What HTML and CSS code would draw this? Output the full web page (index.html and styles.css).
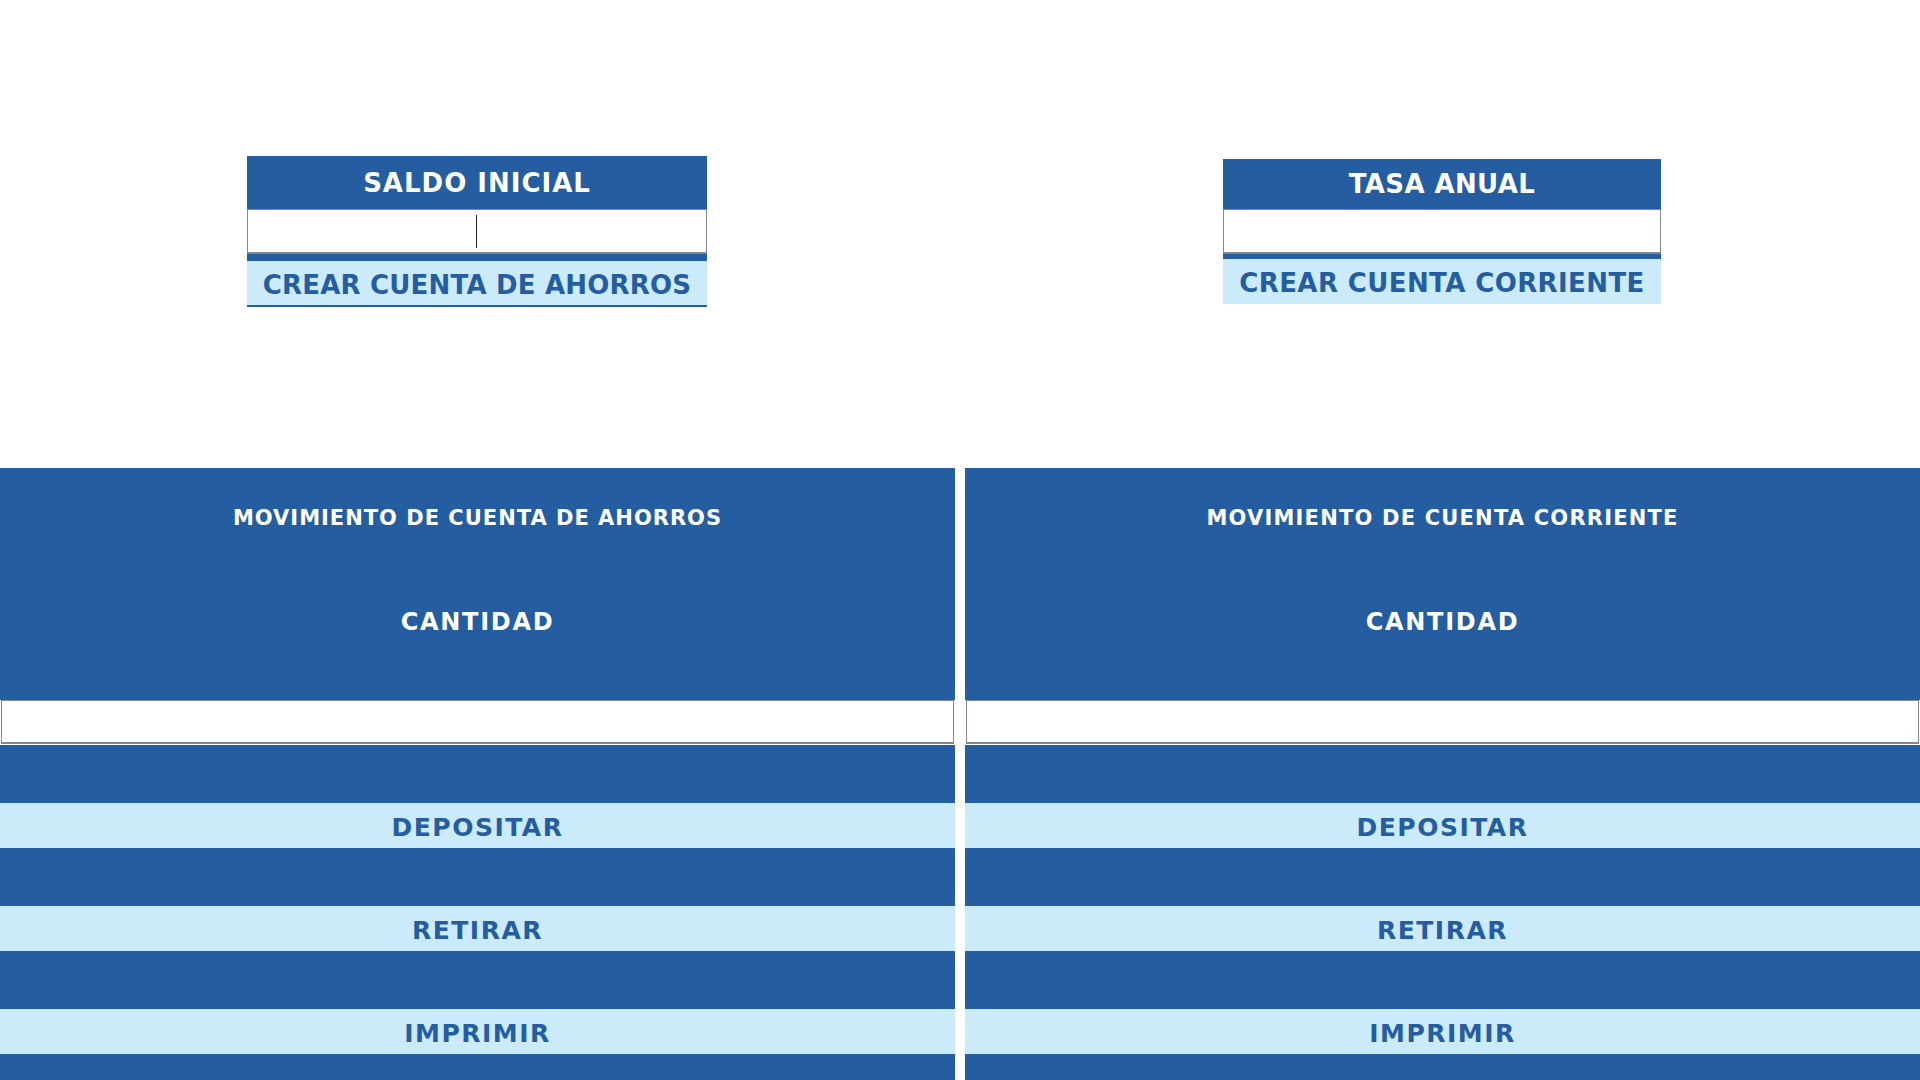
FILE: index.html
```html
<!DOCTYPE html>
<html lang="es">
<head>
<meta charset="utf-8">
<title>Cuentas</title>
<link rel="stylesheet" href="styles.css">
</head>
<body>
<div class="page">
  <section class="top">
    <div class="form form-ahorros">
      <div class="form-head">SALDO INICIAL</div>
      <div class="form-input"><span class="caret"></span></div>
      <div class="form-bar"></div>
      <div class="form-btn">CREAR CUENTA DE AHORROS</div>
    </div>
    <div class="form form-corriente">
      <div class="form-head">TASA ANUAL</div>
      <div class="form-input"></div>
      <div class="form-bar"></div>
      <div class="form-btn">CREAR CUENTA CORRIENTE</div>
    </div>
  </section>
  <section class="bottom">
    <div class="panel">
      <div class="panel-head">
        <div class="panel-title">MOVIMIENTO DE CUENTA DE AHORROS</div>
        <div class="panel-label">CANTIDAD</div>
      </div>
      <div class="panel-input-wrap"><div class="panel-input"></div></div>
      <div class="panel-btn">DEPOSITAR</div>
      <div class="panel-btn">RETIRAR</div>
      <div class="panel-btn">IMPRIMIR</div>
    </div>
    <div class="panel">
      <div class="panel-head">
        <div class="panel-title panel-title-wide">MOVIMIENTO DE CUENTA CORRIENTE</div>
        <div class="panel-label">CANTIDAD</div>
      </div>
      <div class="panel-input-wrap"><div class="panel-input"></div></div>
      <div class="panel-btn">DEPOSITAR</div>
      <div class="panel-btn">RETIRAR</div>
      <div class="panel-btn">IMPRIMIR</div>
    </div>
  </section>
</div>
</body>
</html>
```
FILE: styles.css
```css
html, body {
  margin: 0;
  padding: 0;
  background: #ffffff;
}
body {
  width: 1920px;
  height: 1080px;
  overflow: hidden;
  font-family: "DejaVu Sans", Verdana, sans-serif;
  font-weight: bold;
}
.page {
  display: flex;
  flex-direction: column;
  width: 1920px;
  height: 1080px;
}
.top {
  height: 468px;
  display: flex;
  align-items: flex-start;
  padding-left: 247px;
  box-sizing: border-box;
}
.form {
  display: flex;
  flex-direction: column;
}
.form-ahorros {
  width: 460px;
  margin-top: 156px;
}
.form-corriente {
  width: 438px;
  margin-top: 159px;
  margin-left: 516px;
}
.form-head {
  background: #255da1;
  color: #ffffff;
  font-size: 26px;
  letter-spacing: 0.4px;
  display: flex;
  align-items: center;
  justify-content: center;
  height: 53px;
}
.form-ahorros .form-head {
  letter-spacing: 1px;
}
.form-corriente .form-head {
  height: 50px;
}
.form-input {
  height: 45px;
  box-sizing: border-box;
  background: #ffffff;
  border: 1px solid #7e8899;
  border-bottom-width: 2px;
  display: flex;
  align-items: center;
  justify-content: center;
}
.caret {
  width: 1px;
  height: 33px;
  background: #222222;
  margin-left: -2px;
}
.form-bar {
  height: 7px;
  background: #255da1;
}
.form-corriente .form-bar {
  height: 5px;
}
.form-btn {
  height: 45px;
  padding-top: 3px;
  background: #cbeafa;
  color: #255da1;
  font-size: 26px;
  letter-spacing: 0.4px;
  display: flex;
  align-items: center;
  justify-content: center;
  box-sizing: border-box;
}
.form-ahorros .form-btn {
  border-bottom: 2px solid #255da1;
  height: 46px;
  letter-spacing: 0.2px;
}
.bottom {
  flex: 1;
  display: flex;
  gap: 10px;
}
.panel {
  flex: 1;
  background: #255da1;
  display: flex;
  flex-direction: column;
}
.panel-head {
  height: 232px;
  display: flex;
  flex-direction: column;
  align-items: center;
  color: #ffffff;
}
.panel-title {
  font-size: 21px;
  line-height: 24px;
  letter-spacing: 1px;
  margin-top: 38px;
}
.panel-title-wide {
  letter-spacing: 1.2px;
}
.panel-label {
  font-size: 24px;
  line-height: 30px;
  letter-spacing: 1.7px;
  margin-top: 77px;
}
.panel-input-wrap {
  background: #ffffff;
  height: 45px;
  padding: 0 1px 1px 1px;
  box-sizing: border-box;
}
.panel-input {
  height: 44px;
  box-sizing: border-box;
  border: 1px solid #7e8899;
  border-bottom-width: 2px;
  background: #ffffff;
}
.panel-btn {
  margin-top: 58px;
  height: 45px;
  padding-top: 3px;
  box-sizing: border-box;
  background: #cbeafa;
  color: #255da1;
  font-size: 25px;
  letter-spacing: 1.5px;
  display: flex;
  align-items: center;
  justify-content: center;
}
```
